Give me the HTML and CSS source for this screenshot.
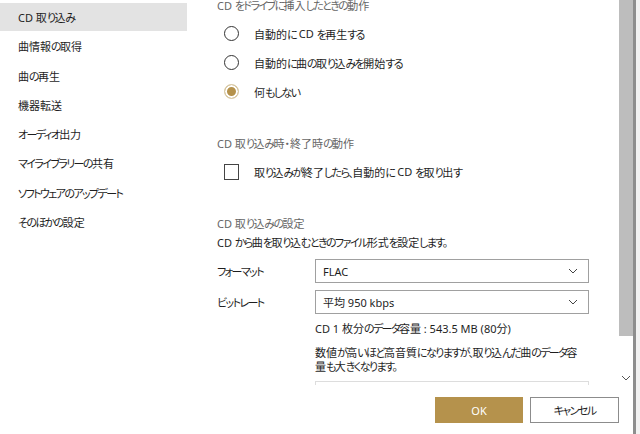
FILE: index.html
```html
<!DOCTYPE html>
<html>
<head lang="ja">
    <meta charset="UTF-8">
    <title>設定</title>
    <link rel="stylesheet" href="styles.css">
</head>
<body>
    <div id="window">
        <!-- 左側メニュー -->
        <ul id="menu">
            <li class="selected">CD 取<i>り</i>込<i>み</i></li>
            <li>曲情報<i>の</i>取得</li>
            <li>曲<i>の</i>再生</li>
            <li>機器転送</li>
            <li><i>オーディオ</i>出力</li>
            <li><i>マイライブラリーの</i>共有</li>
            <li><i>ソフトウェアのアップデート</i></li>
            <li><i>そのほかの</i>設定</li>
        </ul>
        <div id="pane">
            <div id="scroller">
                <div id="content">
                    <h2 class="head">CD <i>をドライブに</i>挿入<i>したときの</i>動作</h2>
                    <div class="options">
                        <div class="opt"><span class="radio"></span>自動的<i>に</i> CD <i>を</i>再生<i>する</i></div>
                        <div class="opt"><span class="radio"></span>自動的<i>に</i>曲<i>の</i>取<i>り</i>込<i>みを</i>開始<i>する</i></div>
                        <div class="opt"><span class="radio on"></span>何<i>もしない</i></div>
                    </div>

                    <h2 class="head gap">CD 取<i>り</i>込<i>み</i>時・終了時<i>の</i>動作</h2>
                    <div class="options">
                        <div class="opt"><span class="check"></span>取<i>り</i>込<i>みが</i>終了<i>したら、</i>自動的<i>に</i> CD <i>を</i>取<i>り</i>出<i>す</i></div>
                    </div>

                    <h2 class="head gap">CD 取<i>り</i>込<i>みの</i>設定</h2>
                    <p class="desc">CD <i>から</i>曲<i>を</i>取<i>り</i>込<i>むときのファイル</i>形式<i>を</i>設定<i>します。</i></p>
                    <div class="field first">
                        <span class="label"><i>フォーマット</i></span>
                        <div class="select">FLAC<svg width="10" height="6" viewBox="0 0 10 6"><path d="M1 1l4 4 4-4" fill="none" stroke="#444" stroke-width="1"/></svg></div>
                    </div>
                    <div class="field">
                        <span class="label"><i>ビットレート</i></span>
                        <div class="select">平均 950 kbps<svg width="10" height="6" viewBox="0 0 10 6"><path d="M1 1l4 4 4-4" fill="none" stroke="#444" stroke-width="1"/></svg></div>
                    </div>
                    <p class="info">CD 1 枚分<i>のデータ</i>容量 : 543.5 MB (80分)</p>
                    <p class="note">数値<i>が</i>高<i>いほど</i>高音質<i>になりますが、</i>取<i>り</i>込<i>んだ</i>曲<i>のデータ</i>容<br>量<i>も</i>大<i>きくなります。</i></p>
                    <div class="select next"></div>
                </div>
                <div id="scrollbar">
                    <div class="thumb"></div>
                    <div class="arrow"><svg width="10" height="6" viewBox="0 0 10 6"><path d="M1 1l4 4 4-4" fill="none" stroke="#555" stroke-width="1"/></svg></div>
                </div>
            </div>
            <div id="footer">
                <button class="btn ok">OK</button>
                <button class="btn"><i>キャンセル</i></button>
            </div>
        </div>
        <div id="edge"></div>
    </div>
</body>
</html>
```

FILE: styles.css
```css
*{
    margin: 0;
    padding: 0;
    box-sizing: border-box;
}
html, body{
    width: 640px;
    height: 434px;
    overflow: hidden;
    background: #fff;
}
body{
    font-family: "Noto Sans", "Noto Sans CJK JP", sans-serif;
    font-size: 11px;
    font-feature-settings: "palt";
    color: #1e1e1e;
}
ul{
    list-style: none;
}
/* かなは狭めに詰める */
i{
    font-style: normal;
    letter-spacing: -1.6px;
}
#window{
    display: flex;
    height: 434px;
}
#menu{
    width: 187px;
    padding-top: 3px;
    flex-shrink: 0;
}
#menu li{
    height: 29.3px;
    line-height: 29px;
    padding-left: 18px;
}
#menu li.selected{
    background: #e3e3e3;
    height: 28px;
    line-height: 30px;
    margin-bottom: 1.3px;
}
#pane{
    width: 446px;
    display: flex;
    flex-direction: column;
}
#scroller{
    height: 385px;
    display: flex;
    overflow: hidden;
}
#content{
    flex: 1;
    padding-left: 30px;
    margin-top: -2px;
}
.head{
    font-size: 11px;
    font-weight: normal;
    color: #666;
    line-height: 15px;
}
.head.gap{
    margin-top: 30px;
}
.options{
    margin-top: 6px;
}
.opt{
    height: 29px;
    display: flex;
    align-items: center;
    padding-left: 7px;
    white-space: pre;
}
.radio, .check{
    width: 15px;
    height: 15px;
    border: 1px solid #333;
    margin-right: 15px;
    flex-shrink: 0;
    background: #fff;
}
.radio{
    border-radius: 50%;
}
.radio.on{
    border-color: #dccfae;
    background: #b5924c;
    box-shadow: inset 0 0 0 2px #fff;
}
.check{
    height: 16px;
    border-color: #444;
}
.desc{
    margin-top: 4px;
    line-height: 16px;
}
.field{
    display: flex;
    align-items: center;
    margin-top: 7px;
}
.field.first{
    margin-top: 8px;
}
.label{
    width: 98px;
}
.select{
    width: 274px;
    height: 24px;
    border: 1px solid #a0a0a0;
    display: flex;
    align-items: center;
    justify-content: space-between;
    padding: 0 10px 0 7px;
}
.select.next{
    margin: 7px 0 0 98px;
    border-color: #ddd;
}
.info{
    margin: 7px 0 0 98px;
    line-height: 16px;
}
.note{
    margin: 9px 0 0 98px;
    line-height: 14px;
}
#scrollbar{
    width: 14px;
    display: flex;
    flex-direction: column;
}
#scrollbar .thumb{
    height: 336px;
    background: #bdbdbd;
}
#scrollbar .arrow{
    height: 49px;
    display: flex;
    justify-content: center;
    padding-top: 39px;
}
#footer{
    flex: 1;
    display: flex;
    justify-content: flex-end;
    gap: 7px;
    padding: 12px 14px 0 0;
    background: #fff;
}
.btn{
    width: 89px;
    height: 26px;
    border: 1px solid #8c8c8c;
    background: #fff;
    font-family: "Noto Sans", "Noto Sans CJK JP", sans-serif;
    font-size: 11px;
    font-feature-settings: "palt";
    color: #1e1e1e;
}
.btn.ok{
    width: 88px;
    background: #b5924c;
    border-color: #b5924c;
    color: #fff;
}
#edge{
    width: 7px;
    border-left: 3px solid #8e8e8e;
    background: #f2f2f2;
}
```
